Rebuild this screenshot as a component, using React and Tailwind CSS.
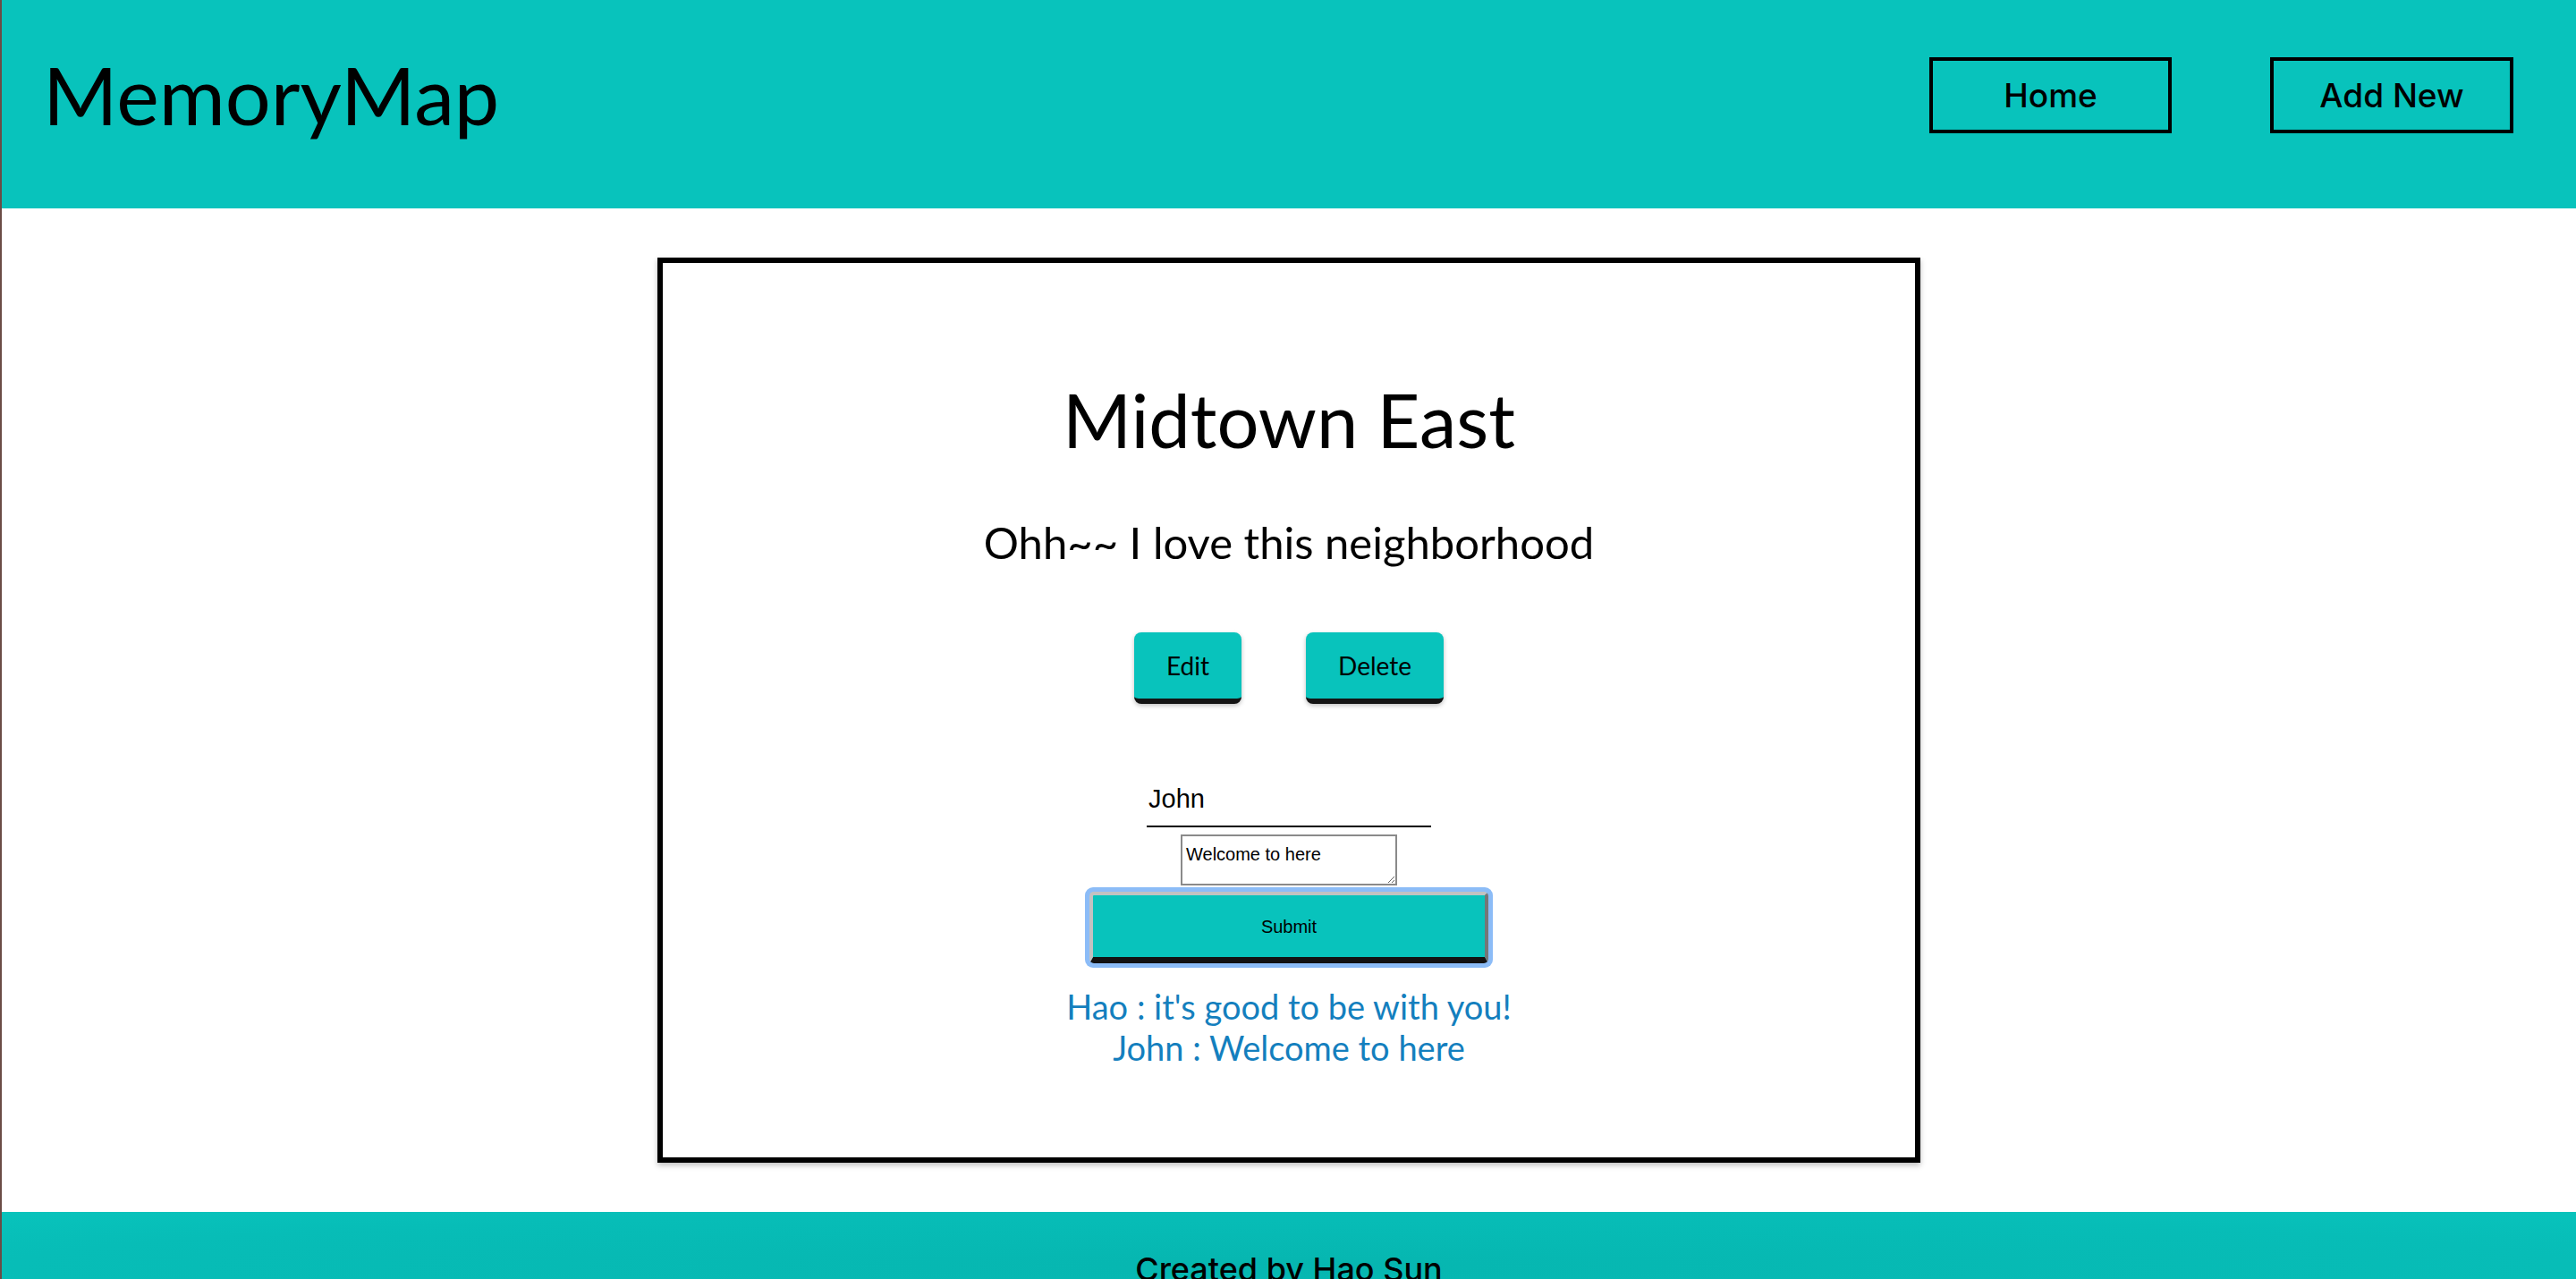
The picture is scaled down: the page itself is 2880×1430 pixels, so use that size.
import React from "react";

const abz = { fontFamily: "Lato, 'Noto Sans', sans-serif" };

export default function App() {
  return (
    <div className="min-h-[1430px] bg-white border-l-2 border-[#6b4c46] flex flex-col">
      <header className="h-[233px] bg-[#08c3bc] flex items-start justify-between pl-[46px] pr-[70px]">
        <div
          className="mt-[60px] text-[90px] leading-none text-black"
          style={abz}
        >
          MemoryMap
        </div>
        <nav className="mt-[64px] flex gap-[110px] font-['Inter',sans-serif] font-medium text-[37px] text-black">
          <a className="w-[271px] h-[85px] border-4 border-black flex items-center justify-center">
            Home
          </a>
          <a className="w-[272px] h-[85px] border-4 border-black flex items-center justify-center">
            Add New
          </a>
        </nav>
      </header>

      <main className="flex justify-center pt-[55px] pb-[55px]">
        <div className="w-[1412px] border-[6px] border-black shadow-[0_3px_6px_rgba(0,0,0,0.25)] flex flex-col items-center pt-[134px] pb-[100px]">
          <h1 className="text-[83px] leading-none text-black" style={abz}>
            Midtown East
          </h1>
          <p className="mt-[71px] text-[49px] leading-none text-black" style={abz}>
            Ohh~~ I love this neighborhood
          </p>
          <div className="mt-[76px] flex gap-[72px]" style={abz}>
            <button className="h-[80px] px-[36px] bg-[#08c3bc] rounded-[8px] border-b-[6px] border-b-[#141414] text-[28px] leading-none text-black shadow-[0_2px_5px_rgba(0,0,0,0.25)]">
              Edit
            </button>
            <button className="h-[80px] px-[36px] bg-[#08c3bc] rounded-[8px] border-b-[6px] border-b-[#141414] text-[28px] leading-none text-black shadow-[0_2px_5px_rgba(0,0,0,0.25)]">
              Delete
            </button>
          </div>
          <input
            className="mt-[84px] w-[318px] h-[54px] pb-[8px] px-[2px] border-b-2 border-black outline-none bg-transparent text-[29px] text-black font-['Liberation_Sans',Arial,sans-serif]"
            defaultValue="John"
          />
          <textarea
            className="mt-[8px] w-[242px] h-[57px] border-2 border-[#8a8a8a] px-[4px] pt-[5px] text-[20px] text-black font-['Liberation_Sans',Arial,sans-serif] outline-none"
            defaultValue="Welcome to here"
          />
          <div className="mt-[2px] w-[456px] h-[90px] p-[5px] rounded-[9px] bg-[#8cbcf7]">
            <button className="w-full h-full bg-[#08c3bc] rounded-[5px] border-t-4 border-l-4 border-t-[#c2c2c2] border-l-[#c2c2c2] border-r-4 border-r-[#767676] border-b-[7px] border-b-[#121212] text-[20px] text-black font-['Liberation_Sans',Arial,sans-serif]">
              Submit
            </button>
          </div>
          <div
            className="mt-[20px] text-[38px] leading-[46px] text-[#147fbe] text-center"
            style={abz}
          >
            <div>Hao : it's good to be with you!</div>
            <div>John : Welcome to here</div>
          </div>
        </div>
      </main>

      <footer className="flex-1 min-h-[120px] bg-[radial-gradient(ellipse_at_center,#06b6b0_0%,#07bdb7_70%,#08c3bc_100%)] flex justify-center pt-[46px]">
        <div className="font-['Inter',sans-serif] font-medium text-[36px] leading-none text-black">
          Created by Hao Sun
        </div>
      </footer>
    </div>
  );
}
